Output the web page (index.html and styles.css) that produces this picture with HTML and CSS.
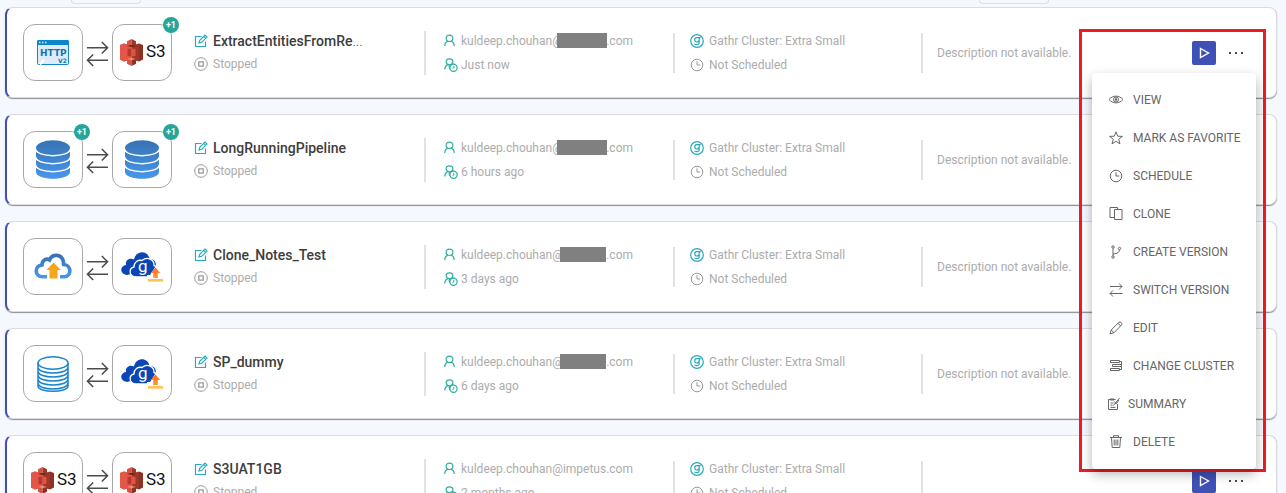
FILE: index.html
```html
<!DOCTYPE html>
<html lang="en">
<head>
<meta charset="utf-8">
<title>Pipelines</title>
<link rel="stylesheet" href="styles.css">
</head>
<body>
<svg class="defs" aria-hidden="true">
  <defs>
    <linearGradient id="blue" x1="0" y1="0" x2="0" y2="1"><stop offset="0" stop-color="#3873b3"/><stop offset="1" stop-color="#4796ec"/></linearGradient>
    <linearGradient id="blueBody" gradientUnits="userSpaceOnUse" x1="0" y1="0" x2="0" y2="39"><stop offset="0" stop-color="#3873b3"/><stop offset="1" stop-color="#4796ec"/></linearGradient>
    <linearGradient id="orange" x1="0" y1="0" x2="0" y2="1"><stop offset="0" stop-color="#ff6a1f"/><stop offset="1" stop-color="#ff9a2e"/></linearGradient>
  </defs>
  <symbol id="http" viewBox="0 0 32 25">
    <rect x=".5" y=".5" width="31" height="24" rx="1" fill="#dcecfa" stroke="#1583c6"/>
    <path d="M0 1.500Q0 0 1.500 0h29Q32 0 32 1.500V5H0z" fill="#0d87cc"/>
    <path d="M2 2.500h1.500M5 2.500h1.500M8 2.500h1.500" stroke="#d5ecfa" stroke-width="1.500"/>
    <path d="M3 24.500L7 20" stroke="#fff" stroke-width="2"/>
    <text x="3" y="15.500" class="http-text">HTTP</text><text x="21" y="22.500" class="http-small">V2</text>
  </symbol>
  <symbol id="s3" viewBox="0 0 44 27">
    <path d="M0 6l4-1.500V22.500L0 20.500z" fill="#b5382a"/><path d="M4 4.500l7.500 2v14l-7.500 2z" fill="#e2574a"/>
    <path d="M23 6l-4-1.500V22.500l4-2z" fill="#8c3123"/><path d="M19 4.500l-7.500 2v14l7.500 2z" fill="#9c3829"/>
    <path d="M0 6l4-1.500 3.500 1v16L4 22.500 0 20.500z" fill="#e2574a"/>
    <path d="M11.500 0L7 2.200v4.600l4.500-1z" fill="#d9513f"/><path d="M11.500 0L16 2.200v4.600l-4.500-1z" fill="#9c3829"/>
    <path d="M7 20.200l4.500 1V27L7 24.700z" fill="#d9513f"/><path d="M16 20.200l-4.500 1V27l4.500-2.300z" fill="#8c3123"/>
    <path d="M7 7l4.500-1.200L16 7l-4.500 1z" fill="#6b2318"/><path d="M7 20l4.500-1.200L16 20l-4.500 1z" fill="#f3897d"/>
    <path d="M7.500 10l4-.5v8l-4-.5z" fill="#b5382a"/><path d="M15.500 10l-4-.5v8l4-.5z" fill="#e05243"/>
    <text x="26" y="18" class="s3-text">S3</text>
  </symbol>
  <symbol id="db" viewBox="0 0 34 39">
    <path d="M0 7.500V32c0 9 34 9 34 0V7.500z" fill="url(#blueBody)"/>
    <ellipse cx="17" cy="7.800" rx="17" ry="7.500" fill="url(#blueBody)"/>
    <path d="M-.5 8.500c0 9.500 35 9.500 35 0M-.5 16.500c0 9.500 35 9.500 35 0M-.5 24.500c0 9.500 35 9.500 35 0" fill="none" stroke="#fff" stroke-width="1.500"/>
  </symbol>
  <symbol id="dbline" viewBox="0 0 32 36">
    <g fill="none" stroke="#1a84cc" stroke-width="1.500"><ellipse cx="16" cy="7" rx="15" ry="6.200"/>
    <path d="M1 7v23c0 7 30 7 30 0V7M1 11c0 8 30 8 30 0M1 15c0 8 30 8 30 0M1 19c0 8 30 8 30 0M1 23c0 8 30 8 30 0M1 27c0 8 30 8 30 0"/></g>
  </symbol>
  <symbol id="cloudup" viewBox="0 0 38 27">
    <path d="M13 23.800H8.500C.2 23.500.2 12.800 8 12 8 7 12.500 5 15.500 7 18 .5 28 .5 29.500 9c0 1-.2 2 0 2.500 8 .2 8.500 11.500 1 12.300H26" fill="none" stroke="url(#blue)" stroke-width="3.600"/>
    <path d="M19.500 9.500l7.500 7.500h-3.500v8.500h-8V17H12.500z" fill="#f5a61c"/>
  </symbol>
  <symbol id="gcloud" viewBox="0 0 42 31">
    <path d="M6 24C-2 23-1 14.500 5 14 4 9 9 6.500 13 8.500 15-1 27-1 28.500 8c6 0 8 5 5 9z" fill="#0a47b5"/>
    <path d="M15 26C7 25 8 17 13 16c0-5 4-7.500 8-6.500 5-4.500 12.500-1 12 5 3 .5 4 4 2 6L30 26z" fill="#0a47b5" stroke="#fff" stroke-width="1.300"/>
    <text x="17" y="20.500" class="g-text">g</text>
    <path d="M34.500 15.500l8 9h-3v3H26v-3.500h3z" fill="#fff"/>
    <path d="M34.500 16.500l4.700 5.500h-2.400v5h-4.600v-5h-2.400z" fill="url(#orange)"/><path d="M27 28h15v2.700H27z" fill="#ffc35a"/>
  </symbol>
  <symbol id="arrows" viewBox="0 0 24 26"><path d="M1 7.500h21M16.500 1.500l6 6-6 6M23 20.500H2M7.500 14.500l-6 6 6 6" fill="none" stroke="#4c4c4c" stroke-width="1.600"/></symbol>
  <symbol id="compose" viewBox="0 0 14 14"><path d="M7.500 2.500H1.500v10h10v-5M5 9l.7-2.700L11 1l2 2-5.300 5.300zM9.700 2.300l2 2" fill="none" stroke="currentColor" stroke-width="1.200"/></symbol>
  <symbol id="stop" viewBox="0 0 14 14"><g fill="none" stroke="currentColor" stroke-width="1"><circle cx="7" cy="7" r="6.300"/><path d="M4.800 4.800h4.400v4.400H4.800z" stroke-width="1.300"/></g></symbol>
  <symbol id="user" viewBox="0 0 14 14"><path d="M5.500 1.200c5 0 4 6.300 0 6.300s-5-6.300 0-6.300zM.7 12c.2-3 1.300-4.300 3.500-4.800M10.300 12C10 9 9 7.700 6.800 7.200" fill="none" stroke="currentColor" stroke-width="1.200"/></symbol>
  <symbol id="usertime" viewBox="0 0 14 14"><path d="M5.500.8c5 0 4 6 0 6s-5-6 0-6zM.7 11.500c.2-3 1.300-4.300 3.500-4.800M6 11C3.500 6.500 7 6 9.500 6.200" fill="none" stroke="currentColor" stroke-width="1.200"/><circle cx="9.500" cy="9.800" r="3.600" fill="#fff" stroke="currentColor" stroke-width="1.200"/><path d="M9.800 7.800v2.200l-1.300.6" fill="none" stroke="currentColor"/></symbol>
  <symbol id="gathr" viewBox="0 0 14 14"><g fill="none" stroke="currentColor" stroke-width="1.200"><circle cx="7" cy="7" r="6.300"/><path d="M9.200 3.700H6.500c-2.300 0-2.300 4.300 0 4.300s2.700-1 2.700-2zM10.700 3.700H9.200V9c0 2-4 2-4.700.8"/></g></symbol>
  <symbol id="clock" viewBox="0 0 14 14"><g fill="none" stroke="currentColor"><circle cx="7" cy="7" r="5.800"/><path d="M7 3.200V7h3.300"/></g></symbol>
  <symbol id="play" viewBox="0 0 12 12"><path d="M2.500 1.500l8 4.500-8 4.500z" fill="none" stroke="#fff" stroke-width="1.400"/></symbol>
  <symbol id="dots" viewBox="0 0 16 4"><path d="M1 1h2v2H1zM7 1h2v2H7zM13 1h2v2h-2z" fill="#444a5a"/></symbol>
  <symbol id="eye" viewBox="0 0 14 14"><g fill="none" stroke="currentColor"><path d="M0 6.500c4-4.500 10-4.500 14 0-4 4.500-10 4.500-14 0z"/><circle cx="7" cy="6.500" r="2.500"/></g><circle cx="7" cy="6.500" r="1.300" fill="currentColor"/></symbol>
  <symbol id="star" viewBox="0 0 14 14"><path d="M7 .8l1.700 4.400 4.700.2-3.700 2.900 1.300 4.500L7 10.300l-4 2.500 1.300-4.500L.6 5.400l4.700-.2z" fill="none" stroke="currentColor"/></symbol>
  <symbol id="clone" viewBox="0 0 14 14"><path d="M5.500 2.500h7.500v10H5.500zM5 10.500H1v-10h7.500v2" fill="none" stroke="currentColor"/></symbol>
  <symbol id="branch" viewBox="0 0 14 14"><g fill="none" stroke="currentColor"><circle cx="4" cy="2" r="1.200"/><circle cx="4" cy="12" r="1.200"/><circle cx="10.500" cy="3.500" r="1.200"/><path d="M4 3.300v7.500M4 9c4.500-.3 6.500-2 6.500-4.200"/></g></symbol>
  <symbol id="switch" viewBox="0 0 14 14"><path d="M1 3.500h12M10 .5l3 3-3 3M13.500 10.500H1M4 7.500l-3 3 3 3" fill="none" stroke="currentColor"/></symbol>
  <symbol id="pencil" viewBox="0 0 14 14"><path d="M1 13l1.200-4L10 1.200c1.500-1 3.500.9 2.700 2.600L5 11.700zM9 2.300l2.700 2.700M2.200 9L5 11.700" fill="none" stroke="currentColor"/></symbol>
  <symbol id="cluster" viewBox="0 0 14 14"><path d="M1.500 1.500h9v2h-9zM3.500 5.500h9v2h-9zM1.500 9.500h9v2h-9zM12.500 7.500v3h-2M10.500 2.500h2v3" fill="none" stroke="currentColor"/></symbol>
  <symbol id="summary" viewBox="0 0 14 14"><path d="M8.500 2.500H1.500v10h9V7M3.500 6h3M3.500 8.200h2M3.500 10.400h5M6.500 8.500L12.500 1M7.500 4.500l1.500 2.500 3-4" fill="none" stroke="currentColor"/><path d="M3 2.500h4" stroke="currentColor" stroke-width="2" fill="none"/></symbol>
  <symbol id="trash" viewBox="0 0 14 14"><path d="M1 2.500h12M4.500 2.500V.7h5v1.800M2.500 2.500l.7 10h7.600l.7-10M5.200 4.500v6M7 4.500v6M8.800 4.500v6" fill="none" stroke="currentColor"/></symbol>
</svg>

<div class="topbar"><span class="tab"></span><span class="tab"></span></div>

<main class="list">
  <article class="card">
    <div class="flow">
      <span class="tile"><svg class="i-http"><use href="#http"/></svg></span>
      <svg class="i-arrows"><use href="#arrows"/></svg>
      <span class="tile"><svg class="i-s3"><use href="#s3"/></svg><b class="badge">+1</b></span>
    </div>
    <div class="name"><h2><svg class="icon cyan"><use href="#compose"/></svg><span>ExtractEntitiesFromRe<i>...</i></span></h2><p><svg class="icon"><use href="#stop"/></svg>Stopped</p></div>
    <div class="cell tall"><p><svg class="icon green"><use href="#user"/></svg><span class="mail"><span>kuldeep.chouhan@</span><span>.com</span><span class="mask mask-wide"></span></span></p><p><svg class="icon green"><use href="#usertime"/></svg>Just now</p></div>
    <div class="cell cluster"><p><svg class="icon cyan"><use href="#gathr"/></svg>Gathr Cluster: Extra Small</p><p><svg class="icon"><use href="#clock"/></svg>Not Scheduled</p></div>
    <div class="cell about">Description not available.</div>
    <div class="actions"><button class="run" aria-label="Run"><svg><use href="#play"/></svg></button><button class="more" aria-label="More"><svg><use href="#dots"/></svg></button></div>
  </article>

  <article class="card">
    <div class="flow">
      <span class="tile"><svg class="i-db"><use href="#db"/></svg><b class="badge">+1</b></span>
      <svg class="i-arrows"><use href="#arrows"/></svg>
      <span class="tile"><svg class="i-db"><use href="#db"/></svg><b class="badge">+1</b></span>
    </div>
    <div class="name"><h2><svg class="icon cyan"><use href="#compose"/></svg><span>LongRunningPipeline</span></h2><p><svg class="icon"><use href="#stop"/></svg>Stopped</p></div>
    <div class="cell tall"><p><svg class="icon green"><use href="#user"/></svg><span class="mail"><span>kuldeep.chouhan@</span><span>.com</span><span class="mask mask-wide"></span></span></p><p><svg class="icon green"><use href="#usertime"/></svg>6 hours ago</p></div>
    <div class="cell cluster"><p><svg class="icon cyan"><use href="#gathr"/></svg>Gathr Cluster: Extra Small</p><p><svg class="icon"><use href="#clock"/></svg>Not Scheduled</p></div>
    <div class="cell about">Description not available.</div>
    <div class="actions"><button class="run" aria-label="Run"><svg><use href="#play"/></svg></button><button class="more" aria-label="More"><svg><use href="#dots"/></svg></button></div>
  </article>

  <article class="card">
    <div class="flow">
      <span class="tile"><svg class="i-cloud"><use href="#cloudup"/></svg></span>
      <svg class="i-arrows"><use href="#arrows"/></svg>
      <span class="tile"><svg class="i-gcloud"><use href="#gcloud"/></svg></span>
    </div>
    <div class="name"><h2><svg class="icon cyan"><use href="#compose"/></svg><span>Clone_Notes_Test</span></h2><p><svg class="icon"><use href="#stop"/></svg>Stopped</p></div>
    <div class="cell tall"><p><svg class="icon green"><use href="#user"/></svg><span class="mail"><span>kuldeep.chouhan@</span><span>.com</span><span class="mask"></span></span></p><p><svg class="icon green"><use href="#usertime"/></svg>3 days ago</p></div>
    <div class="cell cluster"><p><svg class="icon cyan"><use href="#gathr"/></svg>Gathr Cluster: Extra Small</p><p><svg class="icon"><use href="#clock"/></svg>Not Scheduled</p></div>
    <div class="cell about">Description not available.</div>
    <div class="actions"><button class="run" aria-label="Run"><svg><use href="#play"/></svg></button><button class="more" aria-label="More"><svg><use href="#dots"/></svg></button></div>
  </article>

  <article class="card">
    <div class="flow">
      <span class="tile"><svg class="i-dbline"><use href="#dbline"/></svg></span>
      <svg class="i-arrows"><use href="#arrows"/></svg>
      <span class="tile"><svg class="i-gcloud"><use href="#gcloud"/></svg></span>
    </div>
    <div class="name"><h2><svg class="icon cyan"><use href="#compose"/></svg><span>SP_dummy</span></h2><p><svg class="icon"><use href="#stop"/></svg>Stopped</p></div>
    <div class="cell tall"><p><svg class="icon green"><use href="#user"/></svg><span class="mail"><span>kuldeep.chouhan@</span><span>s.com</span><span class="mask"></span></span></p><p><svg class="icon green"><use href="#usertime"/></svg>6 days ago</p></div>
    <div class="cell cluster"><p><svg class="icon cyan"><use href="#gathr"/></svg>Gathr Cluster: Extra Small</p><p><svg class="icon"><use href="#clock"/></svg>Not Scheduled</p></div>
    <div class="cell about">Description not available.</div>
    <div class="actions"><button class="run" aria-label="Run"><svg><use href="#play"/></svg></button><button class="more" aria-label="More"><svg><use href="#dots"/></svg></button></div>
  </article>

  <article class="card">
    <div class="flow">
      <span class="tile"><svg class="i-s3"><use href="#s3"/></svg></span>
      <svg class="i-arrows"><use href="#arrows"/></svg>
      <span class="tile"><svg class="i-s3"><use href="#s3"/></svg></span>
    </div>
    <div class="name"><h2><svg class="icon cyan"><use href="#compose"/></svg><span>S3UAT1GB</span></h2><p><svg class="icon"><use href="#stop"/></svg>Stopped</p></div>
    <div class="cell tall"><p><svg class="icon green"><use href="#user"/></svg>kuldeep.chouhan@impetus.com</p><p><svg class="icon green"><use href="#usertime"/></svg>2 months ago</p></div>
    <div class="cell cluster"><p><svg class="icon cyan"><use href="#gathr"/></svg>Gathr Cluster: Extra Small</p><p><svg class="icon"><use href="#clock"/></svg>Not Scheduled</p></div>
    <div class="cell about"></div>
    <div class="actions"><button class="run" aria-label="Run"><svg><use href="#play"/></svg></button><button class="more" aria-label="More"><svg><use href="#dots"/></svg></button></div>
  </article>
</main>

<div class="highlight">
  <div class="menu" role="menu">
    <button role="menuitem"><svg class="icon"><use href="#eye"/></svg>VIEW</button>
    <button role="menuitem"><svg class="icon"><use href="#star"/></svg>MARK AS FAVORITE</button>
    <button role="menuitem"><svg class="icon"><use href="#clock"/></svg>SCHEDULE</button>
    <button role="menuitem"><svg class="icon"><use href="#clone"/></svg>CLONE</button>
    <button role="menuitem"><svg class="icon"><use href="#branch"/></svg>CREATE VERSION</button>
    <button role="menuitem"><svg class="icon"><use href="#switch"/></svg>SWITCH VERSION</button>
    <button role="menuitem"><svg class="icon"><use href="#pencil"/></svg>EDIT</button>
    <button role="menuitem"><svg class="icon"><use href="#cluster"/></svg>CHANGE CLUSTER</button>
    <button role="menuitem" class="compact"><svg class="icon"><use href="#summary"/></svg>SUMMARY</button>
    <button role="menuitem"><svg class="icon"><use href="#trash"/></svg>DELETE</button>
  </div>
</div>
</body>
</html>
```

FILE: styles.css
```css
* { box-sizing: border-box; }
html { height: 100%; overflow: hidden; }
body {
  margin: 0;
  height: 100%;
  overflow: hidden;
  position: relative;
  background: #f5f8fe;
  color: #acacac;
  font: 12px/24px Roboto, sans-serif;
}
h2, p { margin: 0; }
svg { display: block; flex: none; overflow: visible; }
symbol { overflow: visible; }
button { border: 0; padding: 0; background: none; font: inherit; color: inherit; }
.defs { position: absolute; width: 0; height: 0; }

.topbar { display: flex; justify-content: space-between; height: 7px; padding: 0 237px 0 71px; }
.tab { width: 70px; height: 4px; border: 1px solid #dcdfe6; border-top: 0; border-radius: 0 0 5px 5px; }

.list { display: flex; flex-direction: column; gap: 16px; padding: 0 9px 0 5px; }
.card {
  display: grid;
  grid-template-columns: 171px minmax(0, 230fr) minmax(0, 249fr) minmax(0, 248fr) minmax(0, 271fr) auto;
  align-items: center;
  padding: 16px 32px 16px 16px;
  background: #fff;
  border: 1px solid #dcdcdf;
  border-left: 2px solid #3f51b5;
  border-radius: 8px;
  box-shadow: 0 1px 1px #8e8e92;
}

.flow { display: flex; align-items: center; gap: 3px; }
.tile {
  position: relative;
  display: flex;
  align-items: center;
  justify-content: center;
  width: 60px;
  height: 57px;
  border: 1px solid #a8a8a8;
  border-radius: 12px;
}
.badge {
  position: absolute;
  top: -8px;
  right: -8px;
  width: 16px;
  height: 16px;
  border-radius: 8px;
  background: #26a69a;
  color: #fff;
  font-size: 9px;
  font-weight: 700;
  line-height: 16px;
  text-align: center;
}
.i-arrows { width: 23px; height: 26px; }
.i-http { width: 32px; height: 25px; }
.i-s3 { width: 44px; height: 27px; }
.i-db { width: 34px; height: 39px; }
.i-dbline { width: 32px; height: 36px; }
.i-cloud { width: 38px; height: 27px; }
.i-gcloud { width: 42px; height: 31px; }
.http-text { font: 700 9px "DejaVu Sans", sans-serif; fill: #1574ad; }
.http-small { font: 700 6px "DejaVu Sans", sans-serif; fill: #1574ad; }
.s3-text { font: 17px Roboto, sans-serif; fill: #111; }
.g-text { font: 17px Roboto, sans-serif; fill: #fff; }

.icon { width: 14px; height: 14px; color: #9a9a9a; }
.icon.cyan { color: #29a9bd; }
.icon.green { color: #2fae9f; }

.name h2, .name p, .cell p { display: flex; align-items: center; gap: 5px; white-space: nowrap; }
.name h2 { color: #3d3d3d; font-size: 14px; font-weight: 500; line-height: 22px; }
.name h2 i { font-style: normal; font-weight: 300; }

.cell { display: flex; flex-direction: column; justify-content: center; height: 40px; padding-left: 15px; border-left: 2px solid #e2e2e2; white-space: nowrap; }
.tall { height: 44px; padding-left: 18px; }
.tall p { gap: 3px; }
.about { padding-left: 14px; }
.mail { position: relative; display: flex; justify-content: space-between; width: 172px; }
.mask { position: absolute; top: 4px; right: 27px; width: 46px; height: 15px; background: #808080; }
.mask-wide { right: 26px; width: 50px; }

.actions { display: flex; align-items: center; gap: 12px; }
.run { display: grid; place-items: center; width: 24px; height: 24px; border-radius: 2px; background: #3f51b5; }
.run svg { width: 12px; height: 12px; }
.more svg { width: 16px; height: 4px; }

.highlight { position: absolute; top: 29px; right: 20px; padding: 41px 7px 0 10px; border: 3px solid #ed1c24; }
.menu {
  display: flex;
  flex-direction: column;
  width: 164px;
  padding: 8px 0;
  background: #fff;
  border-radius: 4px;
  box-shadow: 0 5px 12px rgba(0, 0, 0, .3);
}
.menu button { display: flex; align-items: center; gap: 10px; height: 38px; padding-left: 17px; color: #666; white-space: nowrap; }
.menu .icon { color: #666; }
.menu .compact { gap: 7px; padding-left: 15px; }
```
